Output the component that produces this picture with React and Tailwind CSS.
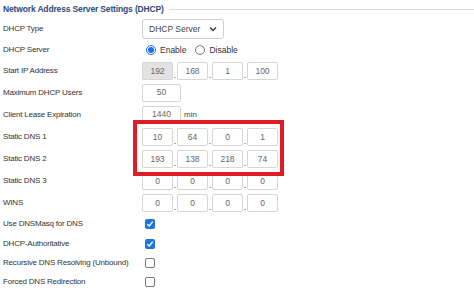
import React from 'react';

const font = { fontFamily: '"Liberation Sans", Arial, sans-serif' };

function Octet({ value, disabled }) {
  return (
    <div
      className={`flex h-[18px] w-[31px] items-center justify-center rounded-[2px] border border-[#d6d6d6] text-[8.5px] text-[#666] ${
        disabled ? 'bg-[#e3e3e3]' : 'bg-white'
      }`}
    >
      {value}
    </div>
  );
}

function IpInput({ values, firstDisabled }) {
  return (
    <div className="flex items-end">
      {values.map((v, i) => (
        <React.Fragment key={i}>
          {i > 0 && <span className="w-[4px] text-center text-[9px] leading-[10px] text-[#444]">.</span>}
          <Octet value={v} disabled={firstDisabled && i === 0} />
        </React.Fragment>
      ))}
    </div>
  );
}

function Row({ label, h, children }) {
  return (
    <div className="flex items-center" style={{ height: h }}>
      <div className="w-[142px] whitespace-nowrap pl-[3px] text-[8px] tracking-[-0.2px] text-[#333]">{label}</div>
      <div className="flex items-center">{children}</div>
    </div>
  );
}

function Check({ on }) {
  return on ? (
    <div className="ml-[3px] flex h-[10px] w-[10px] items-center justify-center rounded-[2px] bg-[#1a73e8]">
      <svg width="8" height="8" viewBox="0 0 8 8">
        <path d="M1.3 4.2 L3.2 6 L6.8 1.6" stroke="white" strokeWidth="1.5" fill="none" />
      </svg>
    </div>
  ) : (
    <div className="ml-[3px] h-[10px] w-[10px] rounded-[2px] border border-[#777] bg-white" />
  );
}

function Radio({ on }) {
  return on ? (
    <div className="flex h-[10px] w-[10px] items-center justify-center rounded-full border border-[#1a73e8] bg-white">
      <div className="h-[6px] w-[6px] rounded-full bg-[#1a73e8]" />
    </div>
  ) : (
    <div className="h-[10px] w-[10px] rounded-full border border-[#777] bg-white" />
  );
}

export default function App() {
  return (
    <div className="relative h-[293px] w-[474px] overflow-hidden bg-white" style={font}>
      <div className="flex h-[18px] items-center pl-[3px]">
        <span className="whitespace-nowrap text-[8.5px] font-bold tracking-[-0.15px] text-[#2d4b7c]">Network Address Server Settings (DHCP)</span>
        <div className="ml-[5px] h-px flex-1 bg-[#d9d9d9]" />
      </div>

      <Row label="DHCP Type" h={22}>
        <div className="flex h-[20px] w-[82px] items-center justify-between rounded-[3px] border border-[#cfcfcf] px-[6px] text-[8.5px] text-[#444]">
          <span>DHCP Server</span>
          <svg width="8" height="6" viewBox="0 0 8 6">
            <path d="M1 1.5 L4 4.5 L7 1.5" stroke="#333" strokeWidth="1.3" fill="none" />
          </svg>
        </div>
      </Row>

      <Row label="DHCP Server" h={20}>
        <div className="ml-[4px] flex items-center gap-[4px] text-[8.5px] text-[#333]">
          <Radio on />
          <span>Enable</span>
          <span className="ml-[5px]">
            <Radio />
          </span>
          <span>Disable</span>
        </div>
      </Row>

      <Row label="Start IP Address" h={22}>
        <IpInput values={['192', '168', '1', '100']} firstDisabled />
      </Row>

      <Row label="Maximum DHCP Users" h={21}>
        <div className="flex h-[18px] w-[39px] items-center justify-center rounded-[2px] border border-[#d6d6d6] text-[8.5px] text-[#666]">50</div>
      </Row>

      <Row label="Client Lease Expiration" h={23}>
        <div className="flex items-center">
          <div className="flex h-[18px] w-[39px] items-center justify-center rounded-[2px] border border-[#d6d6d6] text-[8.5px] text-[#666]">1440</div>
          <span className="ml-[3px] text-[8px] text-[#444]">min</span>
        </div>
      </Row>

      <Row label="Static DNS 1" h={22}>
        <IpInput values={['10', '64', '0', '1']} />
      </Row>
      <Row label="Static DNS 2" h={22}>
        <IpInput values={['193', '138', '218', '74']} />
      </Row>
      <Row label="Static DNS 3" h={22}>
        <IpInput values={['0', '0', '0', '0']} />
      </Row>
      <Row label="WINS" h={22}>
        <IpInput values={['0', '0', '0', '0']} />
      </Row>

      <Row label="Use DNSMasq for DNS" h={20}>
        <Check on />
      </Row>
      <Row label="DHCP-Authoritative" h={19}>
        <Check on />
      </Row>
      <Row label="Recursive DNS Resolving (Unbound)" h={19}>
        <Check />
      </Row>
      <Row label="Forced DNS Redirection" h={20}>
        <Check />
      </Row>

      <div className="absolute left-[133px] top-[120px] h-[56px] w-[151px] border-[4px] border-[#e11d24]" />
    </div>
  );
}
